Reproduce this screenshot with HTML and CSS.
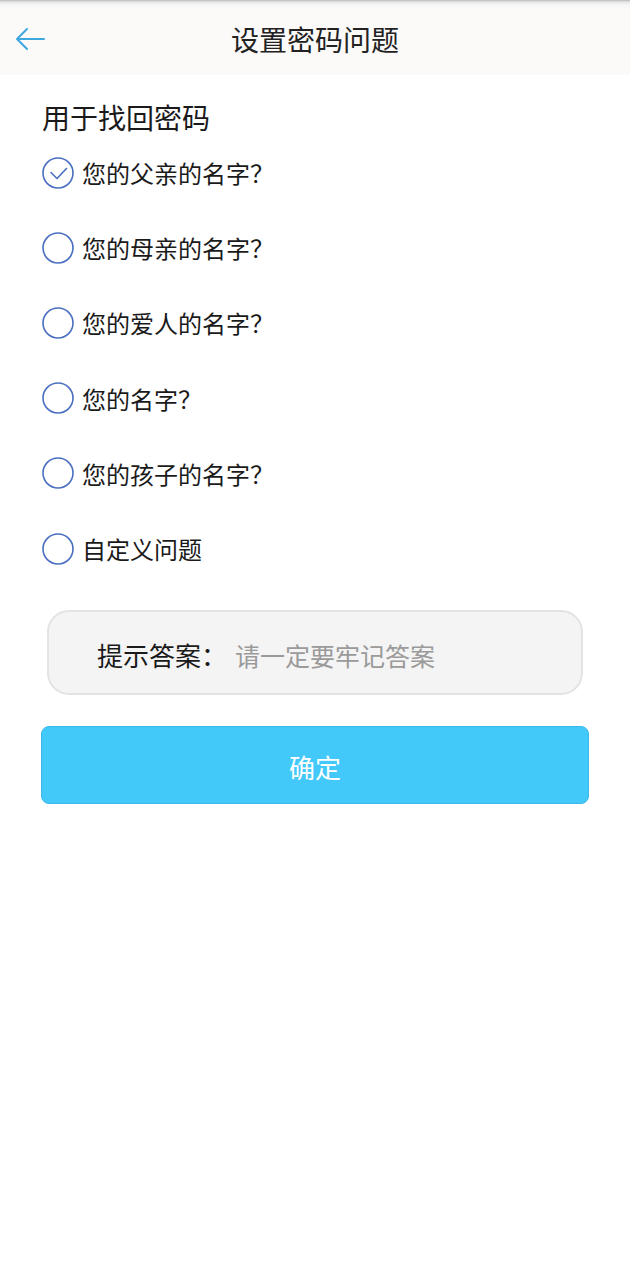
FILE: index.html
```html
<!DOCTYPE html>
<html lang="zh-CN">
<head>
<meta charset="UTF-8" />
<meta name="viewport" content="width=device-width, initial-scale=1" />
<title>设置密码问题</title>
<link rel="stylesheet" href="styles.css">
</head>
<body>

  <header class="topbar">
    <button class="back-btn" type="button" aria-label="返回">
      <svg viewBox="0 0 32 24" aria-hidden="true">
        <path d="M30 12H3M13 2L3 12l10 10" fill="none" stroke="#3ea8df" stroke-width="2" stroke-linecap="round" stroke-linejoin="round"/>
      </svg>
    </button>
    <h1 class="title">设置密码问题</h1>
  </header>

  <main class="content">
    <h2 class="section-label">用于找回密码</h2>

    <ul class="question-list">
      <li class="question checked">
        <span class="radio">
          <svg viewBox="0 0 34 34" aria-hidden="true">
            <circle cx="17" cy="17" r="15" fill="none" stroke="#4a6fc0" stroke-width="1.6"/>
            <path d="M10 16.5l6 6 9.5-10" fill="none" stroke="#4a6fc0" stroke-width="1.6" stroke-linecap="round" stroke-linejoin="round"/>
          </svg>
        </span>
        您的父亲的名字？
      </li>
      <li class="question">
        <span class="radio"><svg viewBox="0 0 34 34" aria-hidden="true"><circle cx="17" cy="17" r="15" fill="none" stroke="#4a6fc0" stroke-width="1.6"/></svg></span>
        您的母亲的名字？
      </li>
      <li class="question">
        <span class="radio"><svg viewBox="0 0 34 34" aria-hidden="true"><circle cx="17" cy="17" r="15" fill="none" stroke="#4a6fc0" stroke-width="1.6"/></svg></span>
        您的爱人的名字？
      </li>
      <li class="question">
        <span class="radio"><svg viewBox="0 0 34 34" aria-hidden="true"><circle cx="17" cy="17" r="15" fill="none" stroke="#4a6fc0" stroke-width="1.6"/></svg></span>
        您的名字？
      </li>
      <li class="question">
        <span class="radio"><svg viewBox="0 0 34 34" aria-hidden="true"><circle cx="17" cy="17" r="15" fill="none" stroke="#4a6fc0" stroke-width="1.6"/></svg></span>
        您的孩子的名字？
      </li>
      <li class="question">
        <span class="radio"><svg viewBox="0 0 34 34" aria-hidden="true"><circle cx="17" cy="17" r="15" fill="none" stroke="#4a6fc0" stroke-width="1.6"/></svg></span>
        自定义问题
      </li>
    </ul>

    <label class="answer-box">
      <span class="answer-label">提示答案：</span>
      <input class="answer-input" type="text" placeholder="请一定要牢记答案">
    </label>

    <button class="confirm-btn" type="button">确定</button>
  </main>

</body>
</html>
```

FILE: styles.css
```css
body {
  margin: 0;
  background: #fff;
  font-family: "Noto Sans CJK SC", "Noto Sans", sans-serif;
  color: #1a1a1a;
}
.topbar {
  height: 75px;
  display: flex;
  align-items: center;
  justify-content: center;
  position: relative;
  background: linear-gradient(to bottom, #b9b9b9 0px, #e6e6e6 2px, #f8f6f6 5px, #fcf9f9 10px);
}
.back-btn {
  position: absolute;
  left: 14px;
  top: 26px;
  width: 34px;
  height: 26px;
  padding: 0;
  border: none;
  background: none;
  cursor: pointer;
}
.back-btn svg {
  width: 32px;
  height: 24px;
  display: block;
}
.title {
  margin: 0;
  font-size: 28px;
  font-weight: 400;
  color: #222;
  padding-top: 3px;
}
.content {
  padding: 0 41px;
  display: flex;
  flex-direction: column;
}
.section-label {
  margin: 24px 0 0 1px;
  font-size: 28px;
  font-weight: 400;
  line-height: 36px;
  color: #1a1a1a;
}
.question-list {
  list-style: none;
  margin: 0;
  padding: 0;
  display: flex;
  flex-direction: column;
}
.question {
  height: 75.2px;
  display: flex;
  align-items: center;
  gap: 7px;
  font-size: 24px;
  color: #1a1a1a;
  text-spacing-trim: space-all;
}
.radio svg {
  width: 34px;
  height: 34px;
  display: block;
}
.answer-box {
  margin: 24px 6px 0;
  height: 85px;
  box-sizing: border-box;
  border: 2px solid #e3e3e3;
  border-radius: 22px;
  background: #f4f4f4;
  display: flex;
  align-items: center;
  padding: 4px 0 0 48px;
}
.answer-label {
  font-size: 26px;
  color: #1a1a1a;
  white-space: nowrap;
}
.answer-input {
  flex: 1;
  min-width: 0;
  border: none;
  outline: none;
  background: transparent;
  font-family: inherit;
  font-size: 25px;
  color: #333;
  padding: 0;
  margin-left: 8px;
}
.answer-input::placeholder {
  color: #9a9a9a;
}
.confirm-btn {
  display: block;
  width: 100%;
  height: 78px;
  margin-top: 31px;
  border: 1px solid #3cb8ea;
  border-radius: 8px;
  background: #43c8fa;
  color: #fff;
  font-family: inherit;
  font-size: 26px;
  padding-top: 4px;
  cursor: pointer;
}
```
